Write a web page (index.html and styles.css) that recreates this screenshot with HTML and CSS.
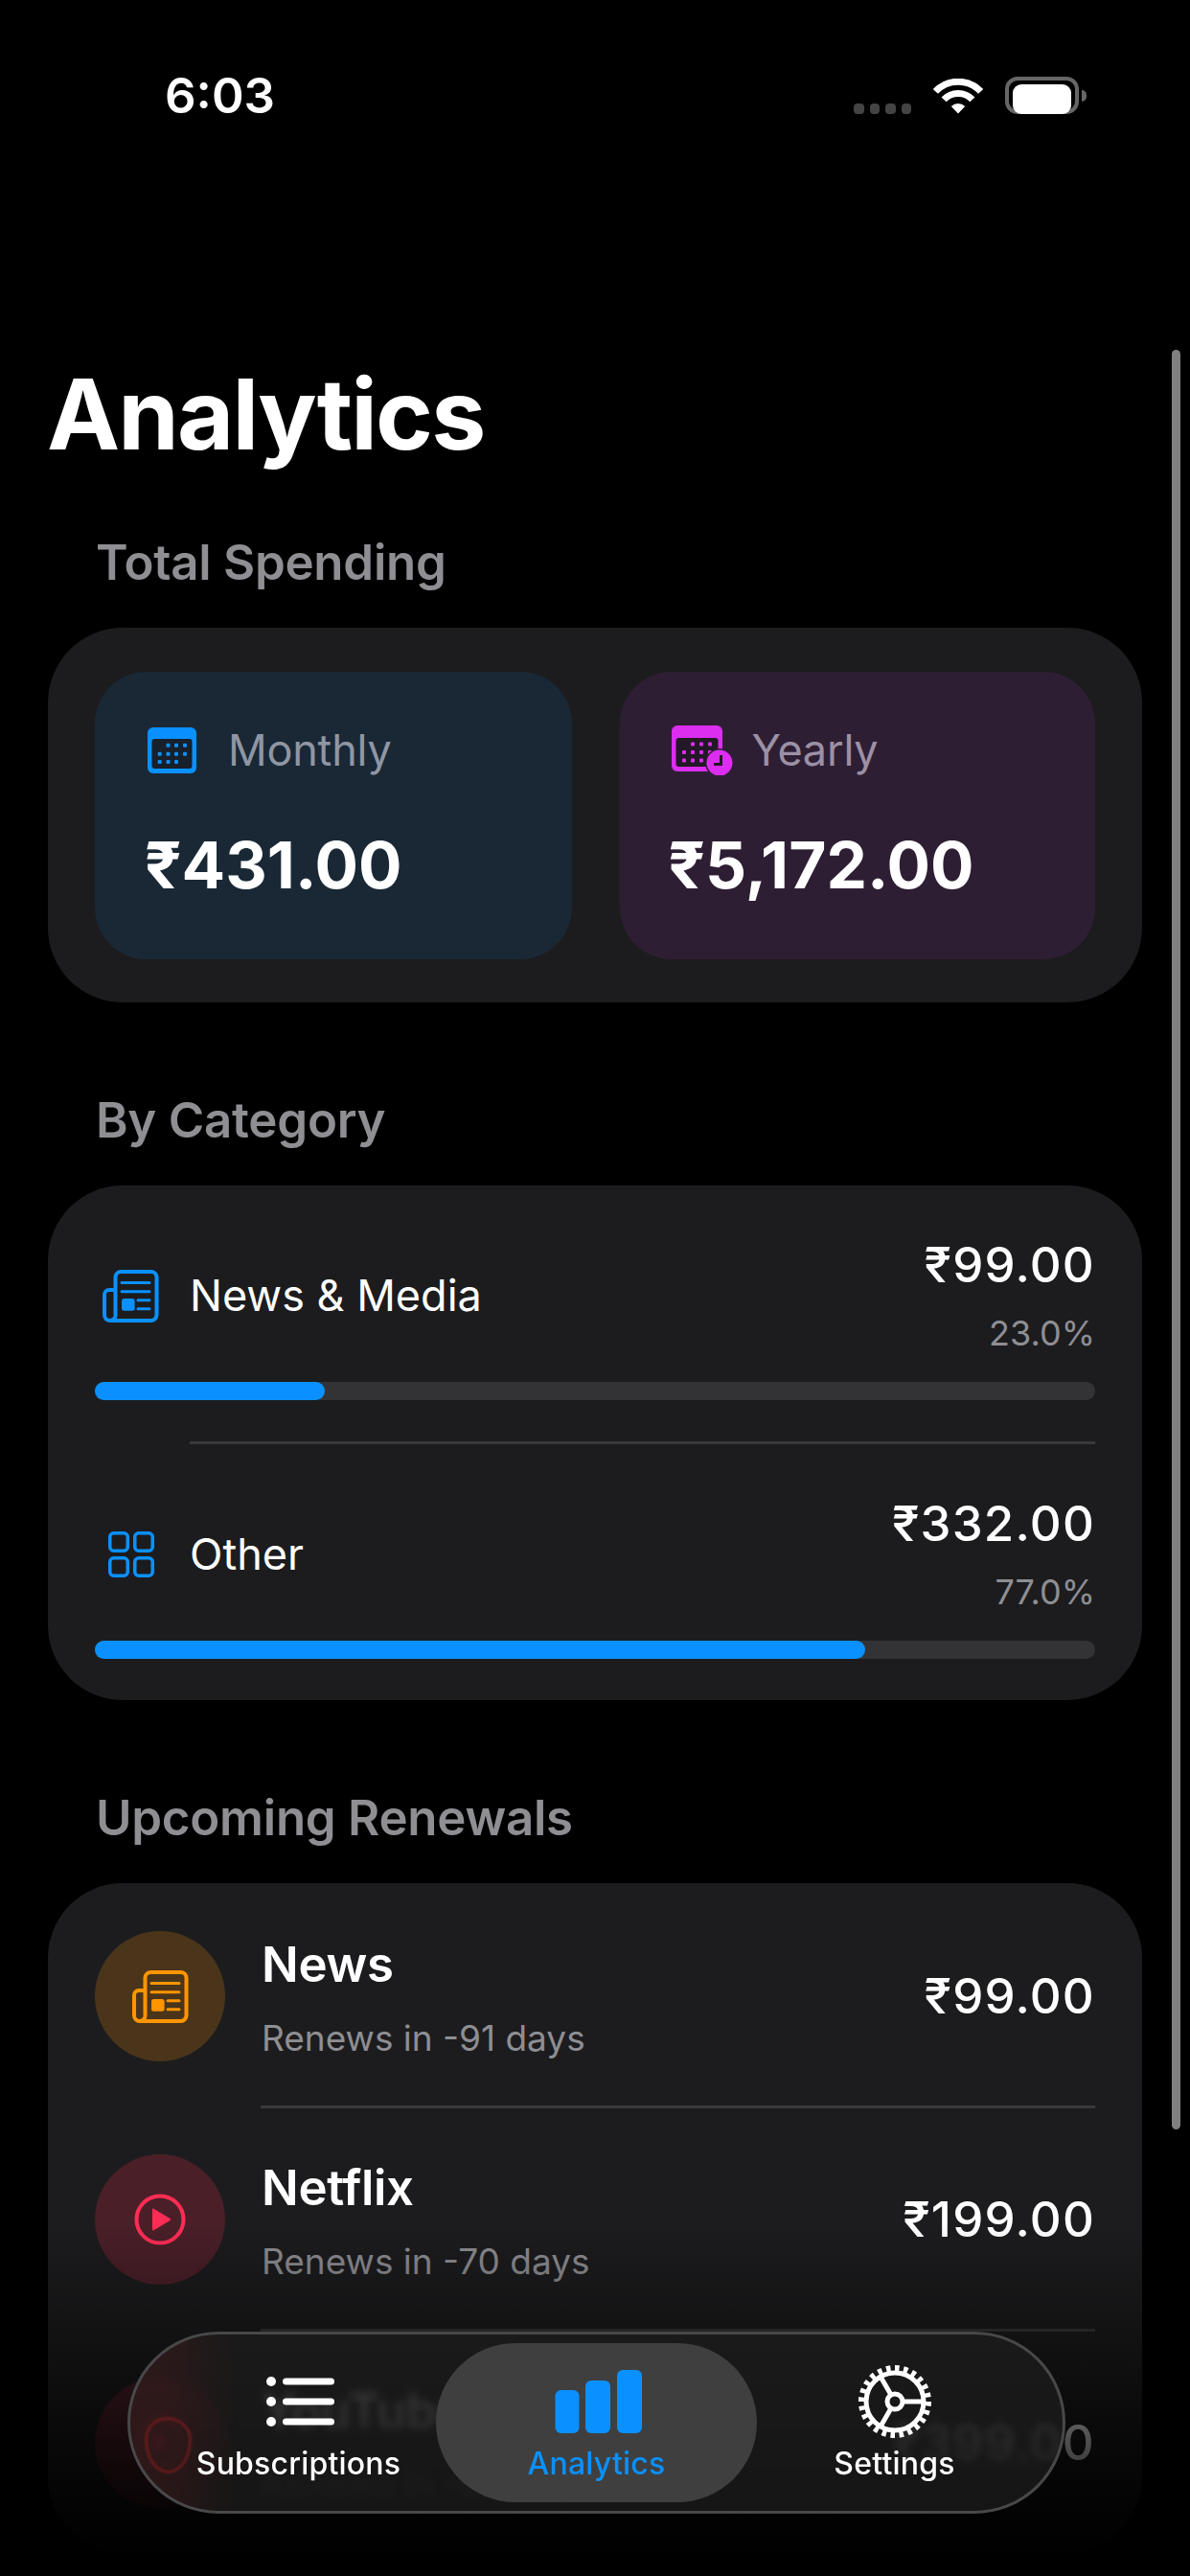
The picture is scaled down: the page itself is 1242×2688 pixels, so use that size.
FILE: index.html
```html
<!DOCTYPE html>
<html>
  <head>
    <meta charset="utf-8" />
    <title>Analytics</title>
    <link rel="stylesheet" href="styles.css">
  </head>

  <body>
    <svg class="defs" xmlns="http://www.w3.org/2000/svg">
      <symbol id="newspaper" viewBox="0 0 59 55">
        <path d="M13.5 47V8a6 6 0 0 1 6-6h31a6 6 0 0 1 6 6v39a6 6 0 0 1-6 6H8" fill="none" stroke="currentColor" stroke-width="4" />
        <path d="M13.5 21H7a5 5 0 0 0-5 5v21a6 6 0 0 0 6 6a5.5 5.5 0 0 0 5.5-6" fill="none" stroke="currentColor" stroke-width="4" />
        <path d="M20 13.5h29M20 22.7h29M37 31.7h12M37 40.7h12" stroke="currentColor" stroke-width="3" stroke-linecap="round" />
        <rect x="20" y="30" width="13.6" height="12.7" rx="2.5" fill="currentColor" />
      </symbol>
      <symbol id="play" viewBox="0 0 54 54">
        <circle cx="27" cy="27" r="24.5" fill="none" stroke="currentColor" stroke-width="4" />
        <path d="M19 16.5a1 1 0 0 1 1.500-.8L37.500 26a1.200 1.200 0 0 1 0 2L20.500 38.300a1 1 0 0 1-1.500-.8z" fill="currentColor" />
      </symbol>
    </svg>

    <header class="status">
      <span class="time">6:03</span>
      <div class="status-icons">
        <div class="signal"><i></i><i></i><i></i><i></i></div>
        <svg class="wifi" viewBox="0 0 52 37" xmlns="http://www.w3.org/2000/svg">
          <path d="M2.400 13.400A32.500 32.500 0 0 1 49.600 13.400M11.100 21.800A20.500 20.500 0 0 1 40.900 21.800" fill="none" stroke="#fff" stroke-width="7" />
          <path d="M26 36.500L18.800 29A10 10 0 0 1 33.200 29Z" fill="#fff" />
        </svg>
        <div class="battery"><div class="battery-level"></div></div>
      </div>
    </header>

    <h1 class="title">Analytics</h1>

    <main class="content">
      <section class="group">
        <h2 class="group-title">Total Spending</h2>
        <div class="card totals">
          <div class="stat stat-monthly">
            <div class="stat-head">
              <svg class="cal" viewBox="0 0 51 48" xmlns="http://www.w3.org/2000/svg">
                <rect width="51" height="48" rx="6" fill="#0a91ff" />
                <rect x="4.500" y="12" width="42" height="31" rx="3" fill="#17202b" />
                <g fill="#0a91ff">
                  <rect x="19.500" y="16.700" width="4" height="4" rx="1" /><rect x="28" y="16.700" width="4" height="4" rx="1" /><rect x="37" y="16.700" width="4" height="4" rx="1" />
                  <rect x="10.700" y="25.700" width="4" height="4" rx="1" /><rect x="19.500" y="25.700" width="4" height="4" rx="1" /><rect x="28" y="25.700" width="4" height="4" rx="1" /><rect x="37" y="25.700" width="4" height="4" rx="1" />
                  <rect x="10.700" y="34" width="4" height="4" rx="1" /><rect x="19.500" y="34" width="4" height="4" rx="1" /><rect x="28" y="34" width="4" height="4" rx="1" />
                </g>
              </svg>
              <span class="stat-label">Monthly</span>
            </div>
            <div class="stat-value">₹431.00</div>
          </div>
          <div class="stat stat-yearly">
            <div class="stat-head">
              <svg class="cal-clock" viewBox="0 0 64 52" xmlns="http://www.w3.org/2000/svg">
                <rect width="53" height="48" rx="6" fill="#db2ef0" />
                <rect x="4.500" y="13" width="44" height="30" rx="3" fill="#231826" />
                <g fill="#db2ef0">
                  <rect x="20" y="17.500" width="4" height="4" rx="1" /><rect x="29" y="17.500" width="4" height="4" rx="1" /><rect x="38" y="17.500" width="4" height="4" rx="1" />
                  <rect x="11" y="26" width="4" height="4" rx="1" /><rect x="20" y="26" width="4" height="4" rx="1" /><rect x="29" y="26" width="4" height="4" rx="1" /><rect x="38" y="26" width="4" height="4" rx="1" />
                  <rect x="11" y="34.500" width="4" height="4" rx="1" /><rect x="20" y="34.500" width="4" height="4" rx="1" /><rect x="29" y="34.500" width="4" height="4" rx="1" />
                </g>
                <circle cx="50" cy="39" r="15" fill="#2e1e33" />
                <circle cx="50" cy="39" r="13.500" fill="#db2ef0" />
                <path d="M51.500 31v9.500H44" fill="none" stroke="#231826" stroke-width="3" />
              </svg>
              <span class="stat-label">Yearly</span>
            </div>
            <div class="stat-value">₹5,172.00</div>
          </div>
        </div>
      </section>

      <section class="group">
        <h2 class="group-title">By Category</h2>
        <div class="card categories">
          <div class="category">
            <div class="category-head">
              <div class="category-icon"><svg class="news-blue"><use href="#newspaper" /></svg></div>
              <span class="category-name">News &amp; Media</span>
              <div class="category-sums">
                <div class="amount">₹99.00</div>
                <div class="percent">23.0%</div>
              </div>
            </div>
            <div class="track"><div class="fill" style="width: 23%"></div></div>
          </div>
          <div class="rule rule-category"></div>
          <div class="category">
            <div class="category-head">
              <div class="category-icon">
                <svg class="grid-icon" viewBox="0 0 48 48" xmlns="http://www.w3.org/2000/svg">
                  <g fill="none" stroke="#0a91ff" stroke-width="3.500">
                    <rect x="1.750" y="1.750" width="18.500" height="18.500" rx="4" />
                    <rect x="27.750" y="1.750" width="18.500" height="18.500" rx="4" />
                    <rect x="1.750" y="27.750" width="18.500" height="18.500" rx="4" />
                    <rect x="27.750" y="27.750" width="18.500" height="18.500" rx="4" />
                  </g>
                </svg>
              </div>
              <span class="category-name">Other</span>
              <div class="category-sums">
                <div class="amount">₹332.00</div>
                <div class="percent">77.0%</div>
              </div>
            </div>
            <div class="track"><div class="fill" style="width: 77%"></div></div>
          </div>
        </div>
      </section>

      <section class="group">
        <h2 class="group-title">Upcoming Renewals</h2>
        <div class="card renewals">
          <div class="renewal">
            <div class="badge badge-orange"><svg class="news-small"><use href="#newspaper" /></svg></div>
            <div class="renewal-text">
              <div class="renewal-name">News</div>
              <div class="renewal-due">Renews in -91 days</div>
            </div>
            <div class="amount">₹99.00</div>
          </div>
          <div class="rule rule-renewal"></div>
          <div class="renewal">
            <div class="badge badge-red"><svg class="play-icon"><use href="#play" /></svg></div>
            <div class="renewal-text">
              <div class="renewal-name">Netflix</div>
              <div class="renewal-due">Renews in -70 days</div>
            </div>
            <div class="amount">₹199.00</div>
          </div>
          <div class="rule rule-renewal"></div>
          <div class="renewal">
            <div class="badge badge-red"><svg class="play-icon"><use href="#play" /></svg></div>
            <div class="renewal-text">
              <div class="renewal-name">YouTube</div>
              <div class="renewal-due">Renews in -65 days</div>
            </div>
            <div class="amount">₹399.00</div>
          </div>
        </div>
      </section>
    </main>

    <div class="scrollbar"></div>
    <div class="fade"></div>

    <nav class="tabbar">
      <div class="tab">
        <svg class="tab-icon" viewBox="0 0 80 80" xmlns="http://www.w3.org/2000/svg">
          <g fill="#fff">
            <circle cx="11" cy="19" r="5" /><circle cx="11" cy="40" r="5" /><circle cx="11" cy="61" r="5" />
            <rect x="23" y="15.500" width="54" height="7" rx="3.500" />
            <rect x="23" y="36.500" width="54" height="7" rx="3.500" />
            <rect x="23" y="57.500" width="54" height="7" rx="3.500" />
          </g>
        </svg>
        <span class="tab-label">Subscriptions</span>
      </div>
      <div class="tab tab-active">
        <svg class="tab-icon" viewBox="0 0 100 80" xmlns="http://www.w3.org/2000/svg">
          <g fill="#0a91ff">
            <rect x="6.500" y="28" width="25" height="45" rx="6" />
            <rect x="38" y="18" width="26" height="55" rx="6" />
            <rect x="71" y="7" width="26" height="66" rx="6" />
          </g>
        </svg>
        <span class="tab-label">Analytics</span>
      </div>
      <div class="tab">
        <svg class="tab-icon" viewBox="0 0 80 80" xmlns="http://www.w3.org/2000/svg">
          <g fill="none" stroke="#fff">
            <circle cx="40" cy="40" r="30" stroke-width="5" />
            <circle cx="40" cy="40" r="34.500" stroke-width="7" pathLength="24" stroke-dasharray="0.5 0.5" />
            <circle cx="40" cy="40" r="8" stroke-width="5" />
            <path d="M48 40H70M36 33L25 14M36 47L25 66" stroke-width="5" />
          </g>
        </svg>
        <span class="tab-label">Settings</span>
      </div>
    </nav>
  </body>
</html>
```

FILE: styles.css
```css
* {
  margin: 0;
  padding: 0;
  box-sizing: border-box;
}

body {
  position: relative;
  width: 1242px;
  height: 2688px;
  overflow: hidden;
  background-color: #000;
  color: #fff;
  font-family: Inter, "Noto Sans", sans-serif;
}

.defs {
  display: none;
}

/* status bar */
.status {
  display: flex;
  justify-content: space-between;
  padding: 70px 116px 0 172px;
  height: 130px;
}

.time {
  font-size: 51px;
  line-height: 60px;
  font-weight: 600;
}

.status-icons {
  display: flex;
  align-items: flex-start;
  margin-top: 10px;
}

.signal {
  display: flex;
  gap: 6px;
  margin: 28px 23px 0 0;
}

.signal i {
  width: 10.500px;
  height: 11px;
  border-radius: 4px;
  background-color: #444;
}

.wifi {
  width: 52px;
  height: 37px;
  margin: 2px 23px 0 0;
}

.battery {
  position: relative;
  width: 77px;
  height: 39px;
  padding: 6px;
  border: 4px solid #666;
  border-radius: 13px;
}

.battery::after {
  content: "";
  position: absolute;
  right: -12px;
  top: 10px;
  width: 5px;
  height: 12px;
  border-radius: 0 5px 5px 0;
  background-color: #666;
}

.battery-level {
  margin: -2px;
  height: 31px;
  border-radius: 9px;
  background-color: #fff;
}

.title {
  margin: 242px 0 0 49px;
  font-size: 102px;
  line-height: 120px;
  font-weight: 700;
  letter-spacing: -1.800px;
}

/* sections */
.content {
  padding: 64px 50px 0;
}

.group {
  margin-bottom: 92px;
}

.group-title {
  position: relative;
  top: 1px;
  padding-left: 50px;
  margin-bottom: 39px;
  font-size: 51px;
  line-height: 60px;
  font-weight: 600;
  letter-spacing: -0.250px;
  color: #8e8e93;
}

.card {
  border-radius: 78px;
  background-color: #1c1c1e;
}

.totals {
  display: flex;
  gap: 50px;
  padding: 46px 49px 45px;
}

.stat {
  flex: 1;
  height: 300px;
  padding-top: 55px;
  border-radius: 54px;
}

.stat-monthly {
  padding-left: 55px;
  background-color: #1a2836;
  color: #8f96a3;
}

.stat-yearly {
  padding-left: 54px;
  background-color: #2e1e33;
  color: #9c90a6;
}

.stat-head {
  display: flex;
  align-items: center;
  height: 54px;
}

.stat-monthly .stat-head {
  gap: 33px;
}

.stat-yearly .stat-head {
  gap: 20px;
}

.cal {
  width: 51px;
  height: 48px;
}

.cal-clock {
  width: 64px;
  height: 52px;
}

.stat-label {
  font-size: 45px;
  line-height: 54px;
  letter-spacing: -0.200px;
}

.stat-value {
  margin: 53px 0 0 -3px;
  font-size: 67.500px;
  line-height: 80px;
  font-weight: 700;
  color: #fff;
}

/* categories */
.categories {
  padding: 53px 49px 43px;
}

.category-head {
  display: flex;
  align-items: center;
  margin-bottom: 28px;
}

.category-icon {
  display: flex;
  justify-content: center;
  width: 75px;
  margin-right: 24px;
}

.news-blue {
  width: 59px;
  height: 55px;
  color: #0a91ff;
}

.grid-icon {
  width: 48px;
  height: 48px;
}

.category-name {
  flex: 1;
  font-size: 45px;
  line-height: 54px;
}

.category-sums {
  text-align: right;
}

.amount {
  font-size: 51px;
  line-height: 60px;
  font-weight: 500;
  letter-spacing: 1.200px;
}

.percent {
  margin-top: 18px;
  font-size: 36px;
  line-height: 46px;
  color: #8e8e93;
}

.track {
  height: 19px;
  border-radius: 10px;
  background-color: #333336;
}

.fill {
  height: 19px;
  border-radius: 10px;
  background-color: #0a91ff;
}

.rule {
  height: 3px;
  background-color: #38383a;
}

.rule-category {
  margin: 43px 0 53px 99px;
}

/* renewals */
.renewals {
  padding: 50px 49px 46px;
}

.renewal {
  display: flex;
  align-items: center;
  gap: 38px;
}

.badge {
  display: flex;
  align-items: center;
  justify-content: center;
  width: 136px;
  height: 136px;
  border-radius: 50%;
}

.badge-orange {
  background-color: #4a351a;
  color: #ff9500;
}

.badge-red {
  background-color: #4a1f28;
  color: #ff2d55;
}

.news-small {
  width: 59px;
  height: 55px;
}

.play-icon {
  width: 54px;
  height: 54px;
}

.renewal-text {
  flex: 1;
  padding-top: 3px;
}

.renewal-name {
  font-size: 51px;
  line-height: 60px;
  font-weight: 600;
  letter-spacing: -0.300px;
}

.renewal-due {
  margin-top: 24px;
  font-size: 37px;
  line-height: 46px;
  color: #8e8e93;
}

.rule-renewal {
  margin: 46px 0 48px 173px;
}

/* overlays */
.scrollbar {
  position: absolute;
  top: 365px;
  right: 10px;
  width: 9px;
  height: 1857px;
  border-radius: 5px;
  background-color: #808080;
}

.fade {
  position: absolute;
  left: 0;
  right: 0;
  bottom: 0;
  height: 368px;
  background: linear-gradient(to bottom, rgba(0, 0, 0, 0), rgba(0, 0, 0, 0.68) 60%, rgba(0, 0, 0, 0.97) 90%, #000);
}

.tabbar {
  position: absolute;
  left: 133px;
  top: 2433px;
  display: flex;
  justify-content: center;
  width: 979px;
  height: 190px;
  padding-top: 30px;
  border: 3px solid #48484a;
  border-radius: 95px;
  background-color: rgba(30, 30, 30, 0.7);
  backdrop-filter: blur(4px);
}

/* red of the row behind, bent by the glass */
.tabbar::before {
  content: "";
  position: absolute;
  left: 0;
  top: 0;
  bottom: 0;
  width: 115px;
  border-radius: 92px 0 0 92px;
  background: linear-gradient(to right, rgba(110, 25, 25, 0.2) 30%, rgba(110, 25, 25, 0));
}

.tabbar::after {
  content: "";
  position: absolute;
  left: 15px;
  top: 86px;
  width: 43px;
  height: 53px;
  border: 3px solid rgba(140, 30, 30, 0.6);
  border-radius: 48% 52% 50% 50% / 40% 40% 60% 60%;
  filter: blur(1px);
}

.tab {
  position: relative;
  display: flex;
  flex-direction: column;
  align-items: center;
  width: 311px;
}

.tab-active::before {
  content: "";
  position: absolute;
  z-index: -1;
  top: -21px;
  bottom: 9px;
  left: -12px;
  right: -12px;
  border-radius: 83px;
  background-color: #3f3f3f;
}

.tab-icon {
  height: 80px;
}

.tab-label {
  margin-top: 7px;
  font-size: 32px;
  line-height: 36px;
  font-weight: 500;
  letter-spacing: 0.200px;
  color: #fff;
}

.tab-active .tab-label {
  color: #0a91ff;
}
```
